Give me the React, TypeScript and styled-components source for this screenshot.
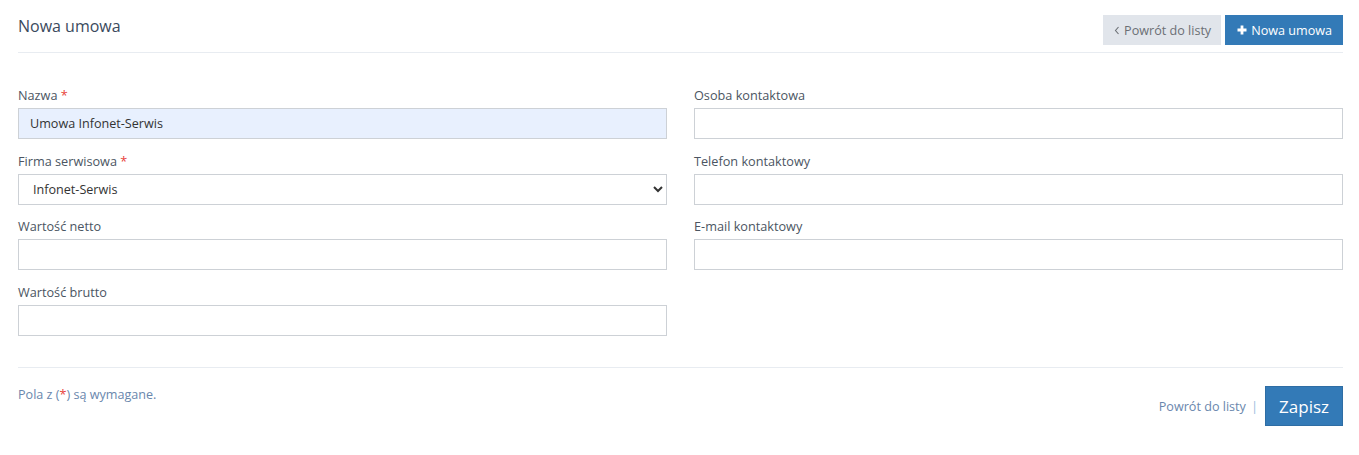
import React from 'react';
import styled, { createGlobalStyle } from 'styled-components';

const GlobalStyle = createGlobalStyle`
  body {
    margin: 0;
    background: #fff;
    font-family: 'Open Sans', 'Liberation Sans', sans-serif;
  }
`;

const Page = styled.div`
  padding: 0 16px 0 18px;
`;

const Header = styled.div`
  display: flex;
  align-items: center;
  justify-content: space-between;
  height: 52px;
  border-bottom: 1px solid #e8ecf1;
`;

const Title = styled.h1`
  margin: 0;
  font-size: 16px;
  font-weight: 400;
  color: #3b4a5d;
  padding-bottom: 1px;
`;

const Actions = styled.div`
  display: flex;
  gap: 4px;
  align-self: flex-start;
  margin-top: 15px;
`;

const Button = styled.button<{ $variant: 'gray' | 'blue' }>`
  display: flex;
  align-items: center;
  gap: 4px;
  height: 30px;
  padding: 0 ${(p) => (p.$variant === 'blue' ? '11px 0 12px' : '10px 0 11px')};
  border: none;
  font-family: inherit;
  font-size: 12.6px;
  cursor: pointer;
  background: ${(p) => (p.$variant === 'blue' ? '#337ab7' : '#e1e5eb')};
  color: ${(p) => (p.$variant === 'blue' ? '#fff' : '#6b6f74')};
`;

const Form = styled.div`
  display: grid;
  grid-template-columns: 1fr 1fr;
  column-gap: 27px;
  padding: 33px 0 19px;
`;

const Column = styled.div`
  display: flex;
  flex-direction: column;
`;

const Field = styled.div`
  margin-bottom: 12.5px;
`;

const Label = styled.label`
  display: block;
  font-size: 12.7px;
  line-height: 18px;
  margin-bottom: 4px;
  color: #4b5562;
`;

const Req = styled.span`
  color: #e8423a;
`;

const Input = styled.input<{ $filled?: boolean }>`
  display: block;
  box-sizing: border-box;
  width: 100%;
  height: 31px;
  padding: 0 11px;
  border: 1px solid #cdd1d6;
  border-radius: 0;
  font-family: inherit;
  font-size: 12.6px;
  color: #333;
  background: ${(p) => (p.$filled ? '#e8f0fe' : '#fff')};
  outline: none;
`;

const Select = styled.select`
  display: block;
  box-sizing: border-box;
  width: 100%;
  height: 31px;
  padding: 0 10px;
  border: 1px solid #cdd1d6;
  border-radius: 0;
  font-family: inherit;
  font-size: 12.6px;
  color: #333;
  background: #fff;
  outline: none;
`;

const Footer = styled.div`
  display: flex;
  justify-content: space-between;
  align-items: flex-start;
  border-top: 1px solid #e8ecf1;
  padding-top: 18px;
`;

const Note = styled.p`
  margin: 0;
  font-size: 12.6px;
  line-height: 18px;
  color: #6a87ad;
`;

const SaveGroup = styled.div`
  display: flex;
  align-items: center;
  gap: 5px;
`;

const BackLink = styled.a`
  font-size: 12.6px;
  color: #6a87ad;
  text-decoration: none;
`;

const Divider = styled.span`
  font-size: 13px;
  color: #9dbbe0;
  margin-right: 2px;
`;

const SaveButton = styled.button`
  height: 40px;
  padding: 0 13px;
  border: 1px solid #2e6da4;
  background: #337ab7;
  color: #fff;
  font-family: inherit;
  font-size: 17px;
  cursor: pointer;
`;

const Plus = () => (
  <svg width="10" height="10" viewBox="0 0 10 10">
    <path d="M5 0.5v9M0.5 5h9" stroke="#fff" strokeWidth="2.8" />
  </svg>
);

const Chevron = () => (
  <svg width="6" height="9" viewBox="0 0 6 9">
    <path d="M4.5 1L1.5 4.5l3 3.5" stroke="#6b6f74" strokeWidth="1.1" fill="none" />
  </svg>
);

const App = () => {
  return (
    <Page>
      <GlobalStyle />
      <Header>
        <Title>Nowa umowa</Title>
        <Actions>
          <Button $variant="gray">
            <Chevron />
            Powrót do listy
          </Button>
          <Button $variant="blue">
            <Plus />
            Nowa umowa
          </Button>
        </Actions>
      </Header>

      <Form>
        <Column>
          <Field>
            <Label>
              Nazwa <Req>*</Req>
            </Label>
            <Input $filled defaultValue="Umowa Infonet-Serwis" />
          </Field>
          <Field>
            <Label>
              Firma serwisowa <Req>*</Req>
            </Label>
            <Select defaultValue="infonet">
              <option value="infonet">Infonet-Serwis</option>
            </Select>
          </Field>
          <Field>
            <Label>Wartość netto</Label>
            <Input />
          </Field>
          <Field>
            <Label>Wartość brutto</Label>
            <Input />
          </Field>
        </Column>
        <Column>
          <Field>
            <Label>Osoba kontaktowa</Label>
            <Input />
          </Field>
          <Field>
            <Label>Telefon kontaktowy</Label>
            <Input />
          </Field>
          <Field>
            <Label>E-mail kontaktowy</Label>
            <Input />
          </Field>
        </Column>
      </Form>

      <Footer>
        <Note>
          Pola z (<Req>*</Req>) są wymagane.
        </Note>
        <SaveGroup>
          <BackLink href="#">Powrót do listy</BackLink>
          <Divider>|</Divider>
          <SaveButton>Zapisz</SaveButton>
        </SaveGroup>
      </Footer>
    </Page>
  );
};

export default App;
